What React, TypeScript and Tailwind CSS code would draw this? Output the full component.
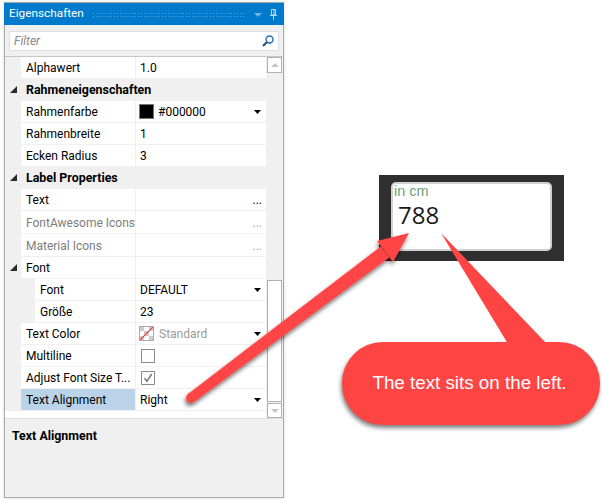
type Row = {
  name: string;
  value?: string;
  kind?: "head" | "group" | "sub" | "dim" | "selected";
  extra?: "dots" | "dimDots" | "drop" | "swatch" | "noColor" | "check" | "checked";
};

const rows: Row[] = [
  { name: "Alphawert", value: "1.0" },
  { name: "Rahmeneigenschaften", kind: "head" },
  { name: "Rahmenfarbe", value: "#000000", extra: "swatch" },
  { name: "Rahmenbreite", value: "1" },
  { name: "Ecken Radius", value: "3" },
  { name: "Label Properties", kind: "head" },
  { name: "Text", extra: "dots" },
  { name: "FontAwesome Icons", kind: "dim", extra: "dimDots" },
  { name: "Material Icons", kind: "dim", extra: "dimDots" },
  { name: "Font", kind: "group" },
  { name: "Font", value: "DEFAULT", kind: "sub", extra: "drop" },
  { name: "Größe", value: "23", kind: "sub" },
  { name: "Text Color", value: "Standard", extra: "noColor" },
  { name: "Multiline", extra: "check" },
  { name: "Adjust Font Size T...", extra: "checked" },
  { name: "Text Alignment", value: "Right", kind: "selected", extra: "drop" },
];

const DropArrow = () => (
  <svg width="7" height="4" viewBox="0 0 7 4" className="ml-auto mr-[5px] shrink-0">
    <path d="M0 0h7L3.5 4z" fill="#000" />
  </svg>
);

const Triangle = () => (
  <svg width="7" height="7" viewBox="0 0 7 7">
    <path d="M7 0v7H0z" fill="#2a2a2a" />
  </svg>
);

const NoColor = () => (
  <svg width="15" height="15" viewBox="0 0 15 15" className="-ml-px mr-[5px] shrink-0">
    <rect width="15" height="15" fill="#fff" />
    <path d="M0 0h5v5H0zM10 0h5v5h-5zM5 5h5v5H5zM0 10h5v5H0zM10 10h5v5h-5z" fill="#ccc" />
    <path d="M0 15L15 0" stroke="#f04040" strokeWidth="1.2" />
    <rect x=".5" y=".5" width="14" height="14" fill="none" stroke="#aaa" />
  </svg>
);

const CheckBox = ({ checked }: { checked?: boolean }) => (
  <div className="ml-px flex h-[14px] w-[14px] items-center justify-center border border-[#8a8a8a] bg-white">
    {checked && (
      <svg width="10" height="10" viewBox="0 0 10 10">
        <path d="M1.5 5.2l2.4 3L8.7 1" fill="none" stroke="#777" strokeWidth="1.5" />
      </svg>
    )}
  </div>
);

const PropRow = ({ row }: { row: Row }) => {
  const isHead = row.kind === "head";
  const isDim = row.kind === "dim";
  const hasArrow = isHead || row.kind === "group";
  const nameCls = row.kind === "selected" ? "bg-[#bad3e8]" : "bg-white";

  return (
    <div className={`flex bg-[#f0f0f0] pb-px ${isDim ? "h-[23px]" : "h-[22px]"}`}>
      <div className="flex w-[16px] shrink-0 items-center justify-center">
        {hasArrow && <Triangle />}
      </div>
      {row.kind === "sub" && <div className="w-[14px] shrink-0" />}
      {isHead ? (
        <div className="flex flex-1 items-center pl-[5px] pt-[2px] text-[12.4px] font-bold text-black">
          {row.name}
        </div>
      ) : (
        <>
          <div
            className={`${nameCls} flex items-center whitespace-nowrap pl-[5px] ${
              row.kind === "sub" ? "w-[100px]" : "w-[114px]"
            } ${isDim ? "pt-px text-[#7d7d7d]" : "text-black"}`}
          >
            {row.name}
          </div>
          <div
            className={`ml-px flex w-[130px] items-center bg-white pl-[4px] text-black ${
              isDim ? "pt-px" : ""
            }`}
          >
            {row.extra === "swatch" && (
              <div className="-ml-px mr-[4px] h-[15px] w-[15px] border border-[#777] bg-black" />
            )}
            {row.extra === "noColor" && <NoColor />}
            {row.extra === "check" && <CheckBox />}
            {row.extra === "checked" && <CheckBox checked />}
            {row.value && (
              <span className={row.extra === "noColor" ? "text-[#9a9a9a]" : ""}>{row.value}</span>
            )}
            {row.extra === "dots" && <span className="ml-auto mr-[4px] leading-none">...</span>}
            {row.extra === "dimDots" && (
              <span className="ml-auto mr-[4px] leading-none text-[#a0a0a0]">...</span>
            )}
            {(row.extra === "drop" || row.extra === "swatch" || row.extra === "noColor") && (
              <DropArrow />
            )}
          </div>
        </>
      )}
    </div>
  );
};

const Scrollbar = () => (
  <div className="flex w-[17px] shrink-0 flex-col bg-[#f0f0f0] px-px">
    <div className="flex h-[16px] items-center justify-center border border-[#b0b0b0] bg-white">
      <svg width="8" height="4" viewBox="0 0 8 4">
        <path d="M4 0l4 4H0z" fill="#c4c4c4" />
      </svg>
    </div>
    <div className="mt-[207px] h-[122px] border border-[#b0b0b0] bg-white" />
    <div className="mt-px flex h-[15px] items-center justify-center border border-[#b0b0b0] bg-white">
      <svg width="8" height="4" viewBox="0 0 8 4">
        <path d="M0 0h8L4 4z" fill="#c4c4c4" />
      </svg>
    </div>
  </div>
);

const Panel = () => (
  <div className="ml-1 mt-[2px] flex h-[496px] w-[280px] flex-col border border-[#a9a9a9] bg-[#f0f0f0] font-['Roboto',sans-serif] text-[12px] shadow-[0_0_3px_rgba(0,0,0,0.15)]">
    <div className="-mx-px flex h-[22px] shrink-0 items-center bg-[#007acc] pl-[5px] pr-[7px] text-white">
      <span className="w-[83px] shrink-0 text-[11.8px]">Eigenschaften</span>
      <div className="mr-2 h-[5px] flex-1 bg-[radial-gradient(#5aa9dc_0.6px,transparent_0.8px)] bg-[length:3px_3px]" />
      <svg width="8" height="4" viewBox="0 0 8 4" className="mr-[8px] mt-[2px] shrink-0">
        <path d="M0 0h8L4 4z" fill="#6cb4e4" />
      </svg>
      <svg width="7" height="11" viewBox="0 0 7 11" className="shrink-0">
        <path d="M1.5.5h4v5.5h-4zM4 1v5M0 6.5h7M3.5 7v4" fill="none" stroke="#b5d9f2" />
      </svg>
    </div>
    <div className="h-[31px] shrink-0 bg-[#f0f0f0] px-[4px] pb-[5px] pt-[6px]">
      <div className="flex h-[20px] items-center border border-[#dadfe6] bg-white pl-[4px] pr-[4px]">
        <span className="italic text-[#8a8a8a]">Filter</span>
        <svg width="12" height="12" viewBox="0 0 12 12" className="ml-auto">
          <circle cx="7.5" cy="4.5" r="3.5" fill="none" stroke="#1f6fb5" strokeWidth="1.4" />
          <path d="M5 7L1 11" stroke="#1f4e85" strokeWidth="2" />
        </svg>
      </div>
    </div>
    <div className="flex h-[362px] shrink-0 border-t border-[#c8c8c8] bg-white">
      <div className="flex-1">
        {rows.map((row, i) => (
          <PropRow key={i} row={row} />
        ))}
      </div>
      <Scrollbar />
    </div>
    <div className="flex-1 border-t border-[#e0e0e0] pl-[7px] pt-[8px] text-[12.4px] font-bold text-black">
      Text Alignment
    </div>
  </div>
);

const LabelWidget = () => (
  <div className="absolute left-[379px] top-[175px] h-[86px] w-[185px] bg-[#2f2f2f] pl-3 pt-[7px]">
    <div className="h-[69px] w-[161px] rounded-[5px] border-2 border-[#d0d0d0] bg-white">
      <div className="-mt-px pl-[1px] font-['Liberation_Sans',sans-serif] text-[14.5px] leading-[16px] text-[#6f9f78]">
        in cm
      </div>
      <div className="pl-[5px] font-['Open_Sans',sans-serif] text-[24px] leading-[32px] text-[#1a1a1a]">
        788
      </div>
    </div>
  </div>
);

const Callout = () => (
  <div className="absolute left-[342px] top-[342px] flex h-[83px] w-[258px] items-center justify-center rounded-[41px] bg-[#ff4444] pr-[3px] font-['Liberation_Sans',sans-serif] text-[18.8px] text-white shadow-[-1px_3px_4px_rgba(0,0,0,0.5)]">
    The text sits on the left.
  </div>
);

// red arrow and the pointer of the callout, drawn over everything else
const Annotations = () => (
  <svg width="602" height="501" viewBox="0 0 602 501" className="absolute left-0 top-0">
    <defs>
      <filter id="sh" x="-20%" y="-20%" width="140%" height="140%">
        <feDropShadow dx="-1" dy="3" stdDeviation="2" floodColor="#000" floodOpacity="0.55" />
      </filter>
    </defs>
    <g fill="#ff4444" filter="url(#sh)">
      <circle cx="191" cy="398" r="5" />
      <path d="M188 394L380.8 246.4L389.2 257.6L194 402z" />
      <path d="M409 233L377 241L393 262z" />
    </g>
    <path d="M441 233L508 344L547 344z" fill="#ff4444" />
  </svg>
);

export default function App() {
  return (
    <div className="relative h-[501px] w-[602px] overflow-hidden bg-white">
      <Panel />
      <LabelWidget />
      <Callout />
      <Annotations />
    </div>
  );
}
